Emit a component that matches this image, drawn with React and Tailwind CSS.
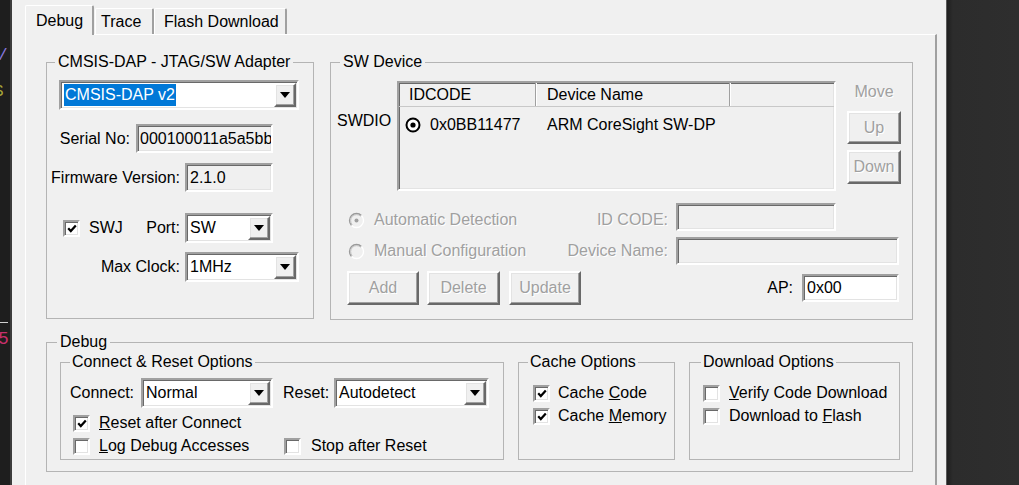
const sunken =
  "border-2 border-t-[#a0a0a0] border-l-[#a0a0a0] border-b-white border-r-white shadow-[inset_1px_1px_0_#696969,inset_-1px_-1px_0_#e3e3e3]";
const raised =
  "border-2 border-t-white border-l-white border-b-[#696969] border-r-[#696969] shadow-[inset_-1px_-1px_0_#a0a0a0,inset_1px_1px_0_#e3e3e3]";
const disabledText = "text-[#a0a0a0] [text-shadow:1px_1px_0_#ffffff]";

function Combo({ className = "", children }) {
  return (
    <div className={`flex shrink-0 bg-white p-px ${sunken} ${className}`}>
      <div className="flex min-w-0 flex-1 items-center overflow-hidden whitespace-nowrap pl-[2px]">
        {children}
      </div>
      <div className={`flex w-[22px] shrink-0 items-center justify-center bg-[#f0f0f0] ${raised}`}>
        <svg width="10" height="6" viewBox="0 0 10 6">
          <path d="M0 0h10L5 6z" fill="#000" />
        </svg>
      </div>
    </div>
  );
}

function Field({ className = "", children }) {
  return (
    <div className={`flex shrink-0 items-center overflow-hidden whitespace-nowrap ${sunken} ${className}`}>
      {children}
    </div>
  );
}

function Btn({ className = "", children }) {
  return (
    <div className={`flex shrink-0 items-center justify-center bg-[#f0f0f0] ${raised} ${disabledText} ${className}`}>
      {children}
    </div>
  );
}

function Check({ checked, className = "" }) {
  return (
    <span className={`flex h-[17px] w-[17px] shrink-0 items-center justify-center bg-white ${sunken} ${className}`}>
      {checked && (
        <svg width="10" height="9" viewBox="0 0 10 9">
          <path d="M1.2 4.2l2.6 2.8L8.8 1.4" fill="none" stroke="#000" strokeWidth="2.2" />
        </svg>
      )}
    </span>
  );
}

function Radio({ checked, className = "" }) {
  return (
    <svg className={`shrink-0 ${className}`} width="17" height="17" viewBox="0 0 17 17">
      <circle cx="8.5" cy="8.5" r="6" fill="#f0f0f0" />
      <path d="M3.55 13.45A7 7 0 0 1 13.45 3.55" fill="none" stroke="#9a9a9a" strokeWidth="1.3" />
      <path d="M13.45 3.55A7 7 0 0 1 3.55 13.45" fill="none" stroke="#ffffff" strokeWidth="1.3" />
      <path d="M4.26 12.74A6 6 0 0 1 12.74 4.26" fill="none" stroke="#c4c4c4" strokeWidth="1" />
      {checked && <circle cx="8.5" cy="8.5" r="2" fill="#a0a0a0" />}
    </svg>
  );
}

function Group({ title, className = "", legendClass = "", children }) {
  return (
    <fieldset className={`shrink-0 border border-[#b4b4b4] ${className}`}>
      <legend className={`leading-[18px] ${legendClass}`}>{title}</legend>
      <div className="flex flex-col">{children}</div>
    </fieldset>
  );
}

function EditorEdge() {
  return (
    <div className="flex w-[10px] shrink-0 flex-col overflow-hidden bg-[#1e1e1e] font-['Liberation_Mono',monospace] text-[16px] leading-[18px]">
      <span className="-ml-[2px] mt-[47px] text-[#8b7ae0]">/</span>
      <span className="-ml-[6px] mt-[18px] text-[#a8a83a]">S</span>
      <div className="mt-[221px] h-px w-[8px] bg-[#cfcfcf]" />
      <span className="-ml-[2px] mt-[6px] text-[18px] leading-[20px] text-[#c8306c]">5</span>
    </div>
  );
}

function Tabs() {
  return (
    <div className="ml-[13px] flex h-[29px] items-end">
      <div className="relative z-10 -mb-px flex h-[30px] w-[69px] items-center rounded-t-[2px] border-l border-t border-white border-r-2 border-r-[#a0a0a0] bg-[#f0f0f0] pl-[10px]">
        Debug
      </div>
      <div className="ml-px flex h-[26px] w-[59px] items-center rounded-t-[2px] border-l border-t border-white border-r-2 border-r-[#a0a0a0] pl-[5px]">
        Trace
      </div>
      <div className="flex h-[26px] w-[133px] items-center rounded-t-[2px] border-l border-t border-white border-r-2 border-r-[#a0a0a0] pl-[9px]">
        Flash Download
      </div>
    </div>
  );
}

function AdapterGroup() {
  return (
    <Group title="CMSIS-DAP - JTAG/SW Adapter" className="h-[266px] w-[268px]" legendClass="ml-[8px] px-[3px]">
      <Combo className="ml-[12px] mt-[9px] h-[30px] w-[240px]">
        <span className="my-px flex items-center self-stretch bg-[#0078d7] px-px text-white">CMSIS-DAP v2</span>
      </Combo>
      <div className="mt-[14px] flex items-center">
        <span className="w-[83px] text-right">Serial No:</span>
        <Field className="ml-[6px] h-[29px] w-[137px] pl-[2px]">000100011a5a5bb</Field>
      </div>
      <div className="mt-[10px] flex items-center">
        <span className="w-[133px] text-right">Firmware Version:</span>
        <Field className="ml-[5px] h-[29px] w-[88px] pl-[3px]">2.1.0</Field>
      </div>
      <div className="mt-[21px] flex items-center">
        <div className="flex w-[133px] items-center">
          <Check checked className="ml-[16px]" />
          <span className="ml-[9px]">SWJ</span>
          <span className="ml-auto">Port:</span>
        </div>
        <Combo className="ml-[5px] h-[30px] w-[88px]">SW</Combo>
      </div>
      <div className="mt-[9px] flex items-center">
        <span className="w-[133px] text-right">Max Clock:</span>
        <Combo className="ml-[5px] h-[30px] w-[114px]">1MHz</Combo>
      </div>
    </Group>
  );
}

function ListView() {
  return (
    <div className={`flex h-[110px] w-[439px] shrink-0 flex-col bg-[#f0f0f0] ${sunken}`}>
      <div className="flex h-[24px] shrink-0 border-b border-[#c8c8c8]">
        <div className="flex w-[137px] items-center border-r border-[#a0a0a0] pl-[10px]">IDCODE</div>
        <div className="flex w-[194px] items-center border-l border-r border-l-white border-r-[#a0a0a0] pl-[10px]">
          Device Name
        </div>
        <div className="flex-1 border-l border-white" />
      </div>
      <div className="mt-[9px] flex items-center">
        <div className="flex w-[137px] items-center pl-[6px]">
          <svg width="16" height="16" viewBox="0 0 16 16" className="shrink-0">
            <circle cx="8" cy="8" r="6.5" fill="#fff" stroke="#000" strokeWidth="2" />
            <circle cx="8" cy="8" r="2.6" fill="#000" />
          </svg>
          <span className="ml-[9px]">0x0BB11477</span>
        </div>
        <span className="pl-[11px]">ARM CoreSight SW-DP</span>
      </div>
    </div>
  );
}

function SwDeviceGroup() {
  return (
    <Group title="SW Device" className="ml-[16px] h-[267px] w-[583px]" legendClass="ml-[9px] px-[3px]">
      <div className="mt-[10px] flex items-start">
        <span className="ml-[6px] mt-[31px] w-[60px]">SWDIO</span>
        <ListView />
        <div className="ml-[11px] flex w-[54px] flex-col items-center">
          <span className={`mt-[2px] ${disabledText}`}>Move</span>
          <Btn className="mt-[10px] h-[33px] w-[54px]">Up</Btn>
          <Btn className="mt-[6px] h-[34px] w-[54px]">Down</Btn>
        </div>
      </div>
      <div className="mt-[12px] flex items-center">
        <div className="mt-[6px] flex w-[337px] items-center">
          <Radio checked className="ml-[17px]" />
          <span className={`ml-[9px] ${disabledText}`}>Automatic Detection</span>
          <span className={`ml-auto ${disabledText}`}>ID CODE:</span>
        </div>
        <Field className="ml-[8px] h-[28px] w-[160px]" />
      </div>
      <div className="mt-[6px] flex items-center">
        <div className="flex w-[337px] items-center">
          <Radio className="ml-[17px]" />
          <span className={`ml-[9px] ${disabledText}`}>Manual Configuration</span>
          <span className={`ml-auto ${disabledText}`}>Device Name:</span>
        </div>
        <Field className="ml-[8px] h-[28px] w-[223px]" />
      </div>
      <div className="mt-[6px] flex items-center">
        <Btn className="ml-[16px] h-[34px] w-[72px]">Add</Btn>
        <Btn className="ml-[8px] h-[34px] w-[73px]">Delete</Btn>
        <Btn className="ml-[9px] h-[34px] w-[72px]">Update</Btn>
        <span className="ml-auto">AP:</span>
        <Field className="ml-[9px] mr-[13px] h-[28px] w-[97px] bg-white pl-[3px]">0x00</Field>
      </div>
    </Group>
  );
}

function DebugGroup() {
  return (
    <Group title="Debug" className="mt-[13px] h-[139px] w-[867px]" legendClass="ml-[10px] px-[3px]">
      <div className="mt-[2px] flex items-start">
        <Group title="Connect & Reset Options" className="ml-[13px] h-[107px] w-[444px]" legendClass="ml-[9px] px-[2px]">
          <div className="mt-[7px] flex items-center">
            <span className="ml-[9px] w-[71px]">Connect:</span>
            <Combo className="h-[30px] w-[132px]">Normal</Combo>
            <span className="ml-[10px] w-[51px]">Reset:</span>
            <Combo className="h-[30px] w-[155px]">Autodetect</Combo>
          </div>
          <div className="mt-[6px] flex items-center">
            <Check checked className="ml-[12px]" />
            <span className="ml-[9px]">
              <u>R</u>eset after Connect
            </span>
          </div>
          <div className="mt-[5px] flex items-center">
            <div className="flex w-[223px] items-center">
              <Check className="ml-[12px]" />
              <span className="ml-[9px]">
                <u>L</u>og Debug Accesses
              </span>
            </div>
            <Check />
            <span className="ml-[10px]">Stop after Reset</span>
          </div>
        </Group>
        <Group title="Cache Options" className="ml-[14px] h-[107px] w-[157px]" legendClass="ml-[9px] px-[2px]">
          <div className="mt-[13px] flex items-center">
            <Check checked className="ml-[14px]" />
            <span className="ml-[8px]">
              Cache <u>C</u>ode
            </span>
          </div>
          <div className="mt-[5px] flex items-center">
            <Check checked className="ml-[14px]" />
            <span className="ml-[8px]">
              Cache <u>M</u>emory
            </span>
          </div>
        </Group>
        <Group title="Download Options" className="ml-[14px] h-[107px] w-[211px]" legendClass="ml-[11px] px-[2px]">
          <div className="mt-[13px] flex items-center">
            <Check className="ml-[13px]" />
            <span className="ml-[9px]">
              <u>V</u>erify Code Download
            </span>
          </div>
          <div className="mt-[5px] flex items-center">
            <Check className="ml-[13px]" />
            <span className="ml-[9px]">
              Download to <u>F</u>lash
            </span>
          </div>
        </Group>
      </div>
    </Group>
  );
}

export default function App() {
  return (
    <div className="flex h-[485px] w-[1019px] overflow-hidden bg-[#2d2d2d] font-['Liberation_Sans',Arial,sans-serif] text-[16px] leading-[18px] text-black">
      <EditorEdge />
      <div className="w-[2px] shrink-0 bg-[#3c3c3c]" />
      <div className="flex w-[935px] shrink-0 flex-col border-r border-[#5a5a5a] bg-[#f0f0f0] pt-[5px]">
        <Tabs />
        <div className="ml-[13px] flex w-[912px] flex-1 flex-col border-l border-t border-white border-r-2 border-r-[#a0a0a0] pl-[20px] pt-[18px]">
          <div className="flex items-start">
            <AdapterGroup />
            <SwDeviceGroup />
          </div>
          <DebugGroup />
        </div>
      </div>
      <div className="flex-1 bg-[linear-gradient(to_right,#1f1f1f,#2c2c2c_6px,#2e2e2e)]" />
    </div>
  );
}
